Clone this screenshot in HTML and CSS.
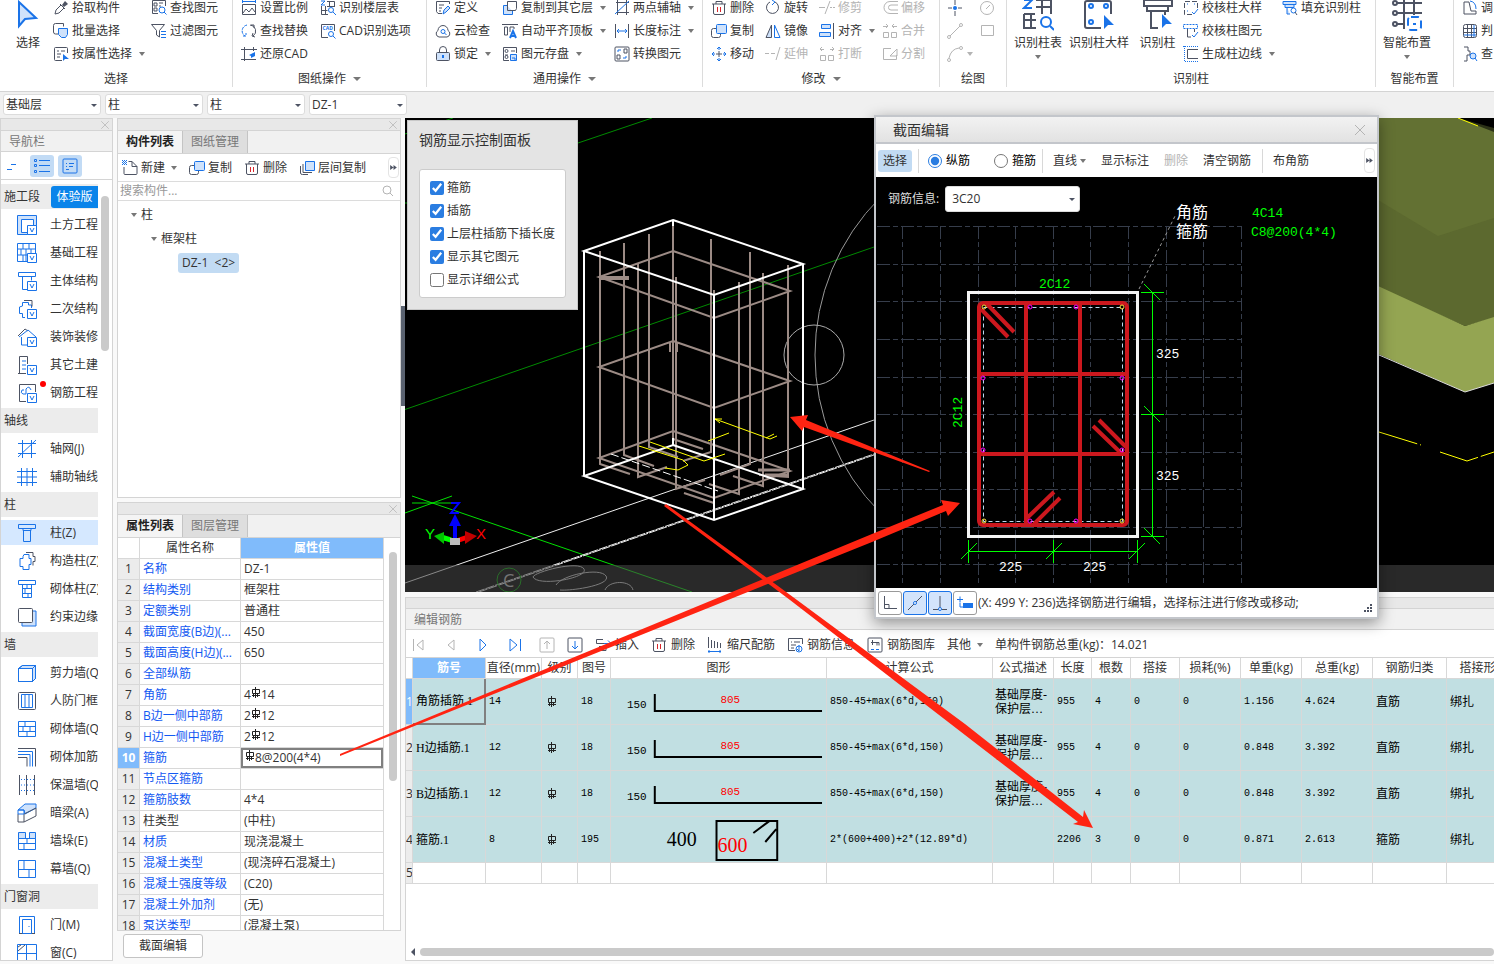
FILE: index.html
```html
<!DOCTYPE html>
<html lang="zh-CN">
<head>
  <meta charset="UTF-8">
  <meta name="viewport" content="width=device-width, initial-scale=1.0">
  <title>截面编辑</title>
  <link rel="stylesheet" href="styles.css">
</head>
<body>
  <!-- icon sprite -->
  <svg class="sprite" aria-hidden="true">
    <symbol id="cursor" viewBox="0 0 32 32"><path class="b2 lf" d="M7 3v24l6-7 11-1z"/></symbol>
    <symbol id="pick" viewBox="0 0 16 16"><path class="k" d="M2 14l1-4 5-5 3 3-5 5zM7 4l5 5"/><path class="kf" d="M9 5l3-4 3 3-4 3z"/></symbol>
    <symbol id="batch" viewBox="0 0 16 16"><path class="k" d="M5 11H2.500a2 2 0 0 1-2-2V2.500a2 2 0 0 1 2-2h8v3"/><path class="b lf" d="M5.500 5.500h9v6l-2 3h-4l-3-3z"/></symbol>
    <symbol id="attr" viewBox="0 0 16 16"><path class="k" d="M9 14.500H2.500a1 1 0 0 1-1-1v-11a1 1 0 0 1 1-1h11a1 1 0 0 1 1 1V7M4 5h2m2 0h4M4 8h4M4 11h3"/><path class="bf" d="M10 8v7l2-2h4z"/></symbol>
    <symbol id="find" viewBox="0 0 16 16"><path class="k" d="M7 13.500H1.500v-13h13V6M3 3h3v3H3zm0 5h3v3H3zM8 3h4M8 6h2"/><circle class="b" cx="11" cy="10" r="3"/><path class="b" d="M13 12l2.500 2.500"/></symbol>
    <symbol id="filter" viewBox="0 0 16 16"><path class="k" d="M.5 1.500h13l-5 6V14l-3-2V7.500z"/><path class="b" d="M10 8.500h5M10 11.500h5M10 14.500h5"/></symbol>
    <symbol id="scale" viewBox="0 0 16 16"><path class="b" d="M1 1.500h14M1.500 0v3M14.500 0v3"/><path class="k" d="M1.500 4.500h13v10h-13zM2 13l3-4 3 3 3-4 3 4"/></symbol>
    <symbol id="replace" viewBox="0 0 16 16"><path class="b" d="M6 2a6 6 0 0 0-2 11M2 13h3v-3" stroke-dasharray="3 1"/><path class="k" d="M9 2a6 6 0 0 1 3 11m2 1l-3-1 1-3M10 2h3v3"/></symbol>
    <symbol id="restore" viewBox="0 0 16 16"><path class="k" d="M3.500 1v14M0 3.500h16M0 13.500h15M12.500 1v4"/><path class="bf" d="M14 6l-6 3 2 1 0 2 4-2z"/></symbol>
    <symbol id="floors" viewBox="0 0 16 16"><path class="k" d="M7 1.500h7.500V7M7 6.500h7M9.500 1v5M1.500 6v8.500H8M1.500 10.500h6M5.500 6v8"/><path class="b" d="M1 1h4L1 5h4"/><circle class="b" cx="11" cy="10" r="2.500"/><path class="b" d="M13 12l3 3"/></symbol>
    <symbol id="cadopt" viewBox="0 0 16 16"><path class="k" d="M8 14.500H1.500v-13h13V8"/><text class="cadtxt" x="2.500" y="7">CAD</text><circle class="b" cx="11" cy="11" r="2.500"/><path class="b" d="M13 13l2.500 2.500"/></symbol>
    <symbol id="define" viewBox="0 0 16 16"><path class="k" d="M7 13.500H3l-1.500-2V1.500h13V4M4 5h5M4 8h3M4 11h2"/><path class="b lf" d="M8 14l1-4 4-4 2 2-4 4z"/></symbol>
    <symbol id="cloud" viewBox="0 0 16 16"><path class="k" d="M4 14a3.500 3.500 0 0 1-1-6.500 5 5 0 0 1 10 0A3.500 3.500 0 0 1 12 14z"/><circle class="b" cx="8" cy="8.500" r="2"/><path class="b" d="M9.500 10l2 2"/></symbol>
    <symbol id="lock" viewBox="0 0 16 16"><rect class="k lf" x="1.500" y="6.500" width="13" height="8" rx="1"/><path class="k" d="M4.500 6V4a3.500 3.500 0 0 1 7 0v2"/><path class="b2" d="M8 9v3"/></symbol>
    <symbol id="copyto" viewBox="0 0 16 16"><path class="b lf" d="M5 5.500H1.500v9h9V11"/><path class="k" d="M5.500 1.500h9v7l-1 2h-8z"/></symbol>
    <symbol id="topalign" viewBox="0 0 16 16"><path class="k" d="M0 1.500h16M2.500 4v8h3V4zM8 9V4h4v2"/><path class="b2" d="M8 15l3-7 3 7M9 13h4"/></symbol>
    <symbol id="save" viewBox="0 0 16 16"><path class="k" d="M7 14.500H1.500v-13h13V7M9 5h4M3 9h3"/><circle class="k" cx="4.500" cy="5" r="1.500"/><circle class="k" cx="4.500" cy="11" r="1.500"/><path class="b lf" d="M8.500 8.500h6v6h-6zM10 12h3v2"/></symbol>
    <symbol id="axis2" viewBox="0 0 16 16"><path class="k" d="M2 2.500h13M2 12.500h13M3.500 0v15M12.500 0v15"/><path class="b" d="M1 14L15 1"/></symbol>
    <symbol id="length" viewBox="0 0 16 16"><path class="k" d="M1.500 1v14M14.500 1v14"/><path class="b" d="M3 8h10M5 6L3 8l2 2M11 6l2 2-2 2"/></symbol>
    <symbol id="convert" viewBox="0 0 16 16"><rect class="k" x="1" y="1" width="14" height="14" rx="1"/><path class="k" d="M3 9h3v4H3zm7-6h3v4h-3z"/><path class="b" d="M4 6V4h3M9 12h3v-2"/></symbol>
    <symbol id="trash" viewBox="0 0 16 16"><path class="k" d="M1 4h14M5 4V1.500h6V4M2.500 4v9a1.500 1.500 0 0 0 1.500 1.500h8a1.500 1.500 0 0 0 1.500-1.500V4"/><path class="r" d="M6.500 7v5M9.500 7v5"/></symbol>
    <symbol id="copy" viewBox="0 0 16 16"><path class="k" d="M5 5.500H2.500a2 2 0 0 0-2 2v5a2 2 0 0 0 2 2h5a2 2 0 0 0 2-2V11"/><rect class="b lf" x="5.500" y="1.500" width="10" height="9" rx="1"/></symbol>
    <symbol id="move" viewBox="0 0 16 16"><path class="b" d="M8 4V1M6 3l2-2 2 2M8 12v3m-2-2l2 2 2-2M4 8H1m2-2L1 8l2 2M12 8h3m-2-2l2 2-2 2"/><path class="k" d="M5 8h6M8 5v6"/></symbol>
    <symbol id="rotate" viewBox="0 0 16 16"><path class="k" d="M10 2a6 6 0 1 1-5 0"/><path class="b" d="M7 0l3 2-3 3"/></symbol>
    <symbol id="mirror" viewBox="0 0 16 16"><path class="k lf" d="M6.500 2v12.500H1z"/><path class="b" d="M9.500 2v12.500H15z"/></symbol>
    <symbol id="alignr" viewBox="0 0 16 16"><path class="k" d="M14.500 0v16"/><path class="b lf" d="M2.500 1.500h9v4h-9zM.5 9.500h11v4H.5z"/></symbol>
    <symbol id="trim" viewBox="0 0 16 16"><path class="g" d="M0 7.500h6M11 7.500h2m1 0h2M6 14L11 1"/></symbol>
    <symbol id="extend" viewBox="0 0 16 16"><path class="g" d="M0 7.500h4m2 0h4M11 14l4-13"/></symbol>
    <symbol id="offset" viewBox="0 0 16 16"><path class="g" d="M16 1.500H8a6 6 0 0 0 0 12h8M16 5H9a2.500 2.500 0 0 0 0 5h7"/></symbol>
    <symbol id="merge" viewBox="0 0 16 16"><path class="g" d="M1.500 9.500h5v5h-5zM9.500 9.500h5v5h-5zM1 3.500h5M4 1l2 2-2 2M15 3.500h-5M12 1l-2 2 2 2"/></symbol>
    <symbol id="break" viewBox="0 0 16 16"><path class="g" d="M1.500 9.500h5v5h-5zM9.500 9.500h5v5h-5zM1 3.500h4M3 1L1 3l2 2M15 3.500h-4M13 1l2 2-2 2"/></symbol>
    <symbol id="split" viewBox="0 0 16 16"><path class="g" d="M9 2.500H1.500v11h13V9M8 10l7-7v7z"/></symbol>
    <symbol id="point" viewBox="0 0 16 16"><path class="k" d="M8 0v5M8 11v5M1 8h4M11 8h4"/><circle class="bf" cx="8" cy="8" r="2"/></symbol>
    <symbol id="line" viewBox="0 0 16 16"><path class="g" d="M3 13L13 3"/><circle class="g" cx="2" cy="14" r="1.500"/><circle class="g" cx="14" cy="2" r="1.500"/></symbol>
    <symbol id="arc" viewBox="0 0 16 16"><path class="g" d="M2 12Q4 3 12 2"/><circle class="g" cx="2" cy="14" r="1.500"/><circle class="g" cx="14" cy="2" r="1.500"/></symbol>
    <symbol id="circle" viewBox="0 0 16 16"><circle class="g" cx="8" cy="8" r="6.500"/><path class="g" d="M7 9l4-4"/></symbol>
    <symbol id="rect" viewBox="0 0 16 16"><path class="g" d="M2.500 2.500h12v10h-12z"/></symbol>
    <symbol id="coltable" viewBox="0 0 32 32"><path class="k2" d="M14 1h15v14M14 8h15M20 1v14M2 15v14h12M2 21h12M9 15v14M2 15h11"/><path class="b2" d="M2 1h8l-8 8h8"/><circle class="b2" cx="24" cy="23" r="5"/><path class="b2" d="M28 27l4 4"/></symbol>
    <symbol id="colsample" viewBox="0 0 32 32"><path class="k2" d="M18 29H4a2 2 0 0 1-2-2V4a2 2 0 0 1 2-2h22a2 2 0 0 1 2 2v11"/><circle class="b2" cx="8" cy="7" r="2"/><circle class="b2" cx="23" cy="7" r="2"/><circle class="b2" cx="8" cy="23" r="2"/><path class="bf" d="M21 16v14l4-4h6z"/></symbol>
    <symbol id="col" viewBox="0 0 32 32"><path class="k2" d="M2 1h28v6H2zM5 8v4h21V8M9 12v17h7M23 12v4"/><path class="bf" d="M20 15v14l4-4h6z"/></symbol>
    <symbol id="smart" viewBox="0 0 32 32"><path class="k2" d="M6 4h25M6 14h25M6 25h8M13 0v30M23 0v16"/><circle class="k2 wf" cx="4" cy="4" r="2"/><circle class="k2 wf" cx="4" cy="14" r="2"/><circle class="k2 wf" cx="4" cy="25" r="2"/><rect class="b2 wf" x="17" y="18" width="13" height="13" rx="3" stroke-dasharray="8 4"/><path class="b2" d="M22 25h3"/></symbol>
    <symbol id="samplecheck" viewBox="0 0 16 16"><path class="k" d="M9 14.500H1.500v-13h13V8" stroke-dasharray="5 2"/><path class="b" d="M4 4h1m6 0h1M4 11h1M9 12l2 2 4-5"/></symbol>
    <symbol id="colcheck" viewBox="0 0 16 16"><path class="b" d="M.5 1.500h14v4H.5z" stroke-dasharray="2 1"/><path class="k" d="M4.500 6v8H8M11.500 6v3"/><path class="b" d="M9 12l2 2 4-5"/></symbol>
    <symbol id="colborder" viewBox="0 0 16 16"><path class="k" d="M15 3.500H4.500v9H15"/><path class="b" d="M1.500 0v15.500H16M0 .5h16" stroke-dasharray="1 1"/></symbol>
    <symbol id="colfill" viewBox="0 0 16 16"><path class="b lf" d="M1 1.500h13v3H1zM3 4.500v3h9v-3M5 7.500v6.500h3"/><circle class="b" cx="11.500" cy="10.500" r="2.500"/><path class="k" d="M13 12l2 3"/></symbol>
    <symbol id="adjust" viewBox="0 0 16 16"><path class="k" d="M2 2h5l2 9h5v3H2z"/><path class="b" d="M8 1q6 1 6 8"/></symbol>
    <symbol id="gridball" viewBox="0 0 16 16"><rect class="k" x="1.500" y="1.500" width="13" height="13" rx="2"/><path class="k" d="M5.500 2v12M9.500 2v12M2 5.500h12M2 9.500h12"/><path class="b" d="M12 2v12M2 12h12"/></symbol>
    <symbol id="query" viewBox="0 0 16 16"><path class="k" d="M2 1h4v4h2v4H5v6H2"/><circle class="b lf" cx="11" cy="10" r="3"/><path class="b" d="M13 12l2 3"/></symbol>
    <symbol id="newdoc" viewBox="0 0 16 16"><path class="k" d="M6.500 1.500H10l5 5v7a1 1 0 0 1-1 1H3a1 1 0 0 1-1-1V7M10 1.500v5h5"/><path class="b" d="M0 .5h5M0 2.500h5M0 4.500h5M1 1.500h4M1 3.500h4" stroke-dasharray="1 1"/></symbol>
    <symbol id="layers" viewBox="0 0 16 16"><path class="b lf" d="M6.500 1.500h9v9h-9z"/><path class="k" d="M4 4v8.500h9M1.500 6v7q0 1.500 2 1.500H9"/></symbol>
    <symbol id="insert" viewBox="0 0 16 16"><path class="k" d="M8 2.500H1.500v4H12M4 9.500h7v4H2"/><path class="b" d="M9 6.500h6m-2-3l3 3-3 3"/></symbol>
    <symbol id="ruler" viewBox="0 0 16 16"><path class="k" d="M1.500 0v11M4.500 3v8M7.500 4v7M10.500 5v6M13.500 6v5"/><path class="b" d="M1 14.500h13M2 13v3M13 13v3"/></symbol>
    <symbol id="info" viewBox="0 0 16 16"><path class="k" d="M8 13.500H1.500v-12h14V7M4 5h1m2 0h6M4 8h5M4 11h3"/><circle class="b" cx="12" cy="12" r="3"/><path class="b" d="M12 8v6l-2-2"/></symbol>
    <symbol id="lib" viewBox="0 0 16 16"><rect class="k" x="1" y="1" width="14" height="14" rx="1"/><path class="k" d="M5.500 3v5M4 5.500h6v3M10 5.500h2v3"/><path class="b" d="M4 12.500h3m2 0h3"/></symbol>
    <symbol id="first" viewBox="0 0 16 16"><path class="g" d="M2.500 2v12M12 3v10L6 8z"/></symbol>
    <symbol id="prev" viewBox="0 0 16 16"><path class="g" d="M11 3v10L5 8z"/></symbol>
    <symbol id="next" viewBox="0 0 16 16"><path class="b" d="M5 2v12l6-6z"/></symbol>
    <symbol id="last" viewBox="0 0 16 16"><path class="b" d="M3 2v12l7-6zM13.500 2v12"/></symbol>
    <symbol id="up" viewBox="0 0 16 16"><rect class="g" x="1" y="1" width="14" height="14" rx="1"/><path class="g" d="M8 12V4M5 7l3-3 3 3"/></symbol>
    <symbol id="down" viewBox="0 0 16 16"><rect class="k" x="1" y="1" width="14" height="14" rx="1"/><path class="b" d="M8 4v8M5 9l3 3 3-3"/></symbol>
    <symbol id="search" viewBox="0 0 16 16"><circle class="g" cx="7" cy="7" r="4"/><path class="g" d="M10 10l3 3"/></symbol>
    <symbol id="close" viewBox="0 0 16 16"><path class="g" d="M3 3l10 10M13 3L3 13"/></symbol>
    <symbol id="more" viewBox="0 0 8 6"><path class="kf" d="M0 0v6l4-3zM4 0v6l4-3z"/></symbol>
    <symbol id="rebar" viewBox="0 0 10 12"><path class="kk" d="M1.500 2.500h7v4h-7zM4.500 0v11M2.500 7v3M6.500 7v3M1 8.500h8"/></symbol>
    <!-- navigation icons -->
    <symbol id="vtag" viewBox="0 0 20 20"><path class="b wf" d="M10.500 10.500h9v9h-9z"/><path class="b" d="M13 13l2 4 2-4"/></symbol>
    <symbol id="n-earth" viewBox="0 0 20 20"><path class="b lf" d="M.5.500h19v19H.5z"/><path class="b wf" d="M4.500 4.500h12v13h-12z"/><use href="#vtag"/></symbol>
    <symbol id="n-base" viewBox="0 0 20 20"><path class="b" d="M.5.500h18v18H.5zM.5 6h18M.5 12h18M6 .5V6M12 .5V6M4 6v6M9 6v12M14 6v6M6 12v6"/><use href="#vtag"/></symbol>
    <symbol id="n-main" viewBox="0 0 20 20"><path class="b" d="M1.500 1.500h17v4h-17zM5.500 5.500v13H10M14.500 5.500v4"/><use href="#vtag"/></symbol>
    <symbol id="n-second" viewBox="0 0 20 20"><path class="b" d="M8 18.500H5.500v-4h-3V8l3-1V3.500h6V6h3v3"/><path class="k" d="M7 1.500h8v6"/><use href="#vtag"/></symbol>
    <symbol id="n-deco" viewBox="0 0 20 20"><path class="k" d="M1 9l7-7 3 2"/><path class="b" d="M2 10l9-7 8 7M4.500 10v8H10"/><use href="#vtag"/></symbol>
    <symbol id="n-other" viewBox="0 0 20 20"><path class="k" d="M1 18.500h8M2.500 18V1.500h8V9"/><path class="b" d="M5 6h4M5 10h4M5 14h4"/><use href="#vtag"/></symbol>
    <symbol id="n-rebar" viewBox="0 0 20 20"><path class="k" d="M9 18.500H2.500v-17h16V9"/><path class="b" d="M7 7H5q-2 3 1 4h3V6q3-4 5 1"/><use href="#vtag"/></symbol>
    <symbol id="n-axis" viewBox="0 0 20 20"><path class="b" d="M1 4.500h18M1 14.500h18M5.500 1v18M14.500 1v18M1 18L19 1"/></symbol>
    <symbol id="n-aux" viewBox="0 0 20 20"><path class="b" d="M0 4.500h20M0 10h20M0 15.500h20M4.500 1v18M10 1v18M15.500 1v18"/></symbol>
    <symbol id="n-col" viewBox="0 0 20 20"><path class="b" d="M1.500 1.500h17v4h-17zM6 5.500v2h8v-2M6.500 7v11.500h7V7"/></symbol>
    <symbol id="n-gz" viewBox="0 0 20 20"><path class="b" d="M7 3.500h5v4h2v6h-2v5H6v-3H3v-8h3v-2z"/><path class="k" d="M9 1.500h7v4h2v5h-2v4"/></symbol>
    <symbol id="n-qt" viewBox="0 0 20 20"><path class="b" d="M1.500 1.500h17v4h-17zM5.500 5.500v13h9v-13M5 9.500h9M5 14.500h9M10 6v3M8 10v4M11 14v4"/></symbol>
    <symbol id="n-ys" viewBox="0 0 20 20"><path class="b lf" d="M5 16v3h14V4h-3"/><rect class="k wf" x="1.500" y="1.500" width="14" height="14" rx="1"/></symbol>
    <symbol id="n-shear" viewBox="0 0 20 20"><path class="b lf" d="M1.500 5.500l4-3h13v13l-3 3z"/><path class="k wf" d="M1.500 5.500h14v13h-14z"/><path class="b" d="M1.500 5.500l4-3h13v13l-3 3M15.500 5.500l3-3M1.500 5.500h14v13h-14z"/></symbol>
    <symbol id="n-rf" viewBox="0 0 20 20"><rect class="k" x="1.500" y="1.500" width="17" height="17" rx="1"/><path class="b" d="M4.500 3.500h11v13h-11zM8 4v12M12 4v12"/></symbol>
    <symbol id="n-brick" viewBox="0 0 20 20"><path class="b" d="M1.500 2.500h17v15h-17zM1 7.500h18M1 12.500h18M8 3v5M6 8v5M13 8v5M10 13v4"/></symbol>
    <symbol id="n-bar" viewBox="0 0 20 20"><path class="k" d="M1 1.500h17.500v18M1 10.500h9v9"/><path class="b" d="M1 4.500h14.500v15M1 7.500h12v12"/></symbol>
    <symbol id="n-warm" viewBox="0 0 20 20"><path class="k" d="M2.500 0v20M9.500 0v20M17.500 0v20"/><path class="b" d="M4 4.500h14M4 10h14M4 15.500h14" stroke-dasharray="1 2"/></symbol>
    <symbol id="n-beam" viewBox="0 0 20 20"><path class="b lf" d="M1 7l7-6h11v4L8 11 7 7z"/><path class="k" d="M1 11v8h6v-8M7 19l12-6V5L7 11"/><path class="b" d="M1 7h6v4H1z"/></symbol>
    <symbol id="n-pier" viewBox="0 0 20 20"><path class="b lf" d="M1.500 1.500h7v6h-7zM12.500 1.500h6v6h-6z"/><path class="b" d="M1.500 7.500h17v11h-17zM1 12.500h17M10 7v5M7 13v5"/></symbol>
    <symbol id="n-curtain" viewBox="0 0 20 20"><path class="b" d="M1.500 1.500h17v17h-17zM1 10.500h17M7 2v8M12 11v7"/></symbol>
    <symbol id="n-door" viewBox="0 0 20 20"><path class="b" d="M2.500 19V1.500h15V19"/><path class="k" d="M2 18.500h4M14 18.500h4"/><path class="b" d="M5.500 4.500h9v14h-9zM12 11v1"/></symbol>
    <symbol id="n-window" viewBox="0 0 20 20"><path class="b" d="M.5 1.500h19v18H.5zM9.500 1v19M0 10.500h20"/><path class="k" d="M1 8l7-6M1 4l3-2"/></symbol>
  </svg>

  <div class="app">
    <header class="ribbon">
      <section class="group g-select">
        <div class="tools">
          <button class="big"><svg><use href="#cursor"/></svg>选择</button>
          <button><svg><use href="#pick"/></svg>拾取构件</button>
          <button><svg><use href="#batch"/></svg>批量选择</button>
          <button><svg><use href="#attr"/></svg>按属性选择<i class="caret"></i></button>
          <button><svg><use href="#find"/></svg>查找图元</button>
          <button><svg><use href="#filter"/></svg>过滤图元</button>
        </div>
        <h2>选择</h2>
      </section>
      <section class="group g-drawing">
        <div class="tools">
          <button><svg><use href="#scale"/></svg>设置比例</button>
          <button><svg><use href="#replace"/></svg>查找替换</button>
          <button><svg><use href="#restore"/></svg>还原CAD</button>
          <button><svg><use href="#floors"/></svg>识别楼层表</button>
          <button><svg><use href="#cadopt"/></svg>CAD识别选项</button>
        </div>
        <h2>图纸操作<i class="caret"></i></h2>
      </section>
      <section class="group g-common">
        <div class="tools">
          <button><svg><use href="#define"/></svg>定义</button>
          <button><svg><use href="#cloud"/></svg>云检查</button>
          <button><svg><use href="#lock"/></svg>锁定<i class="caret"></i></button>
          <button><svg><use href="#copyto"/></svg>复制到其它层<i class="caret"></i></button>
          <button><svg><use href="#topalign"/></svg>自动平齐顶板<i class="caret"></i></button>
          <button><svg><use href="#save"/></svg>图元存盘<i class="caret"></i></button>
          <button><svg><use href="#axis2"/></svg>两点辅轴<i class="caret"></i></button>
          <button><svg><use href="#length"/></svg>长度标注<i class="caret"></i></button>
          <button><svg><use href="#convert"/></svg>转换图元</button>
        </div>
        <h2>通用操作<i class="caret"></i></h2>
      </section>
      <section class="group g-modify">
        <div class="tools">
          <button><svg><use href="#trash"/></svg>删除</button>
          <button><svg><use href="#copy"/></svg>复制</button>
          <button><svg><use href="#move"/></svg>移动</button>
          <button><svg><use href="#rotate"/></svg>旋转</button>
          <button><svg><use href="#mirror"/></svg>镜像</button>
          <button disabled><svg><use href="#extend"/></svg>延伸</button>
          <button disabled><svg><use href="#trim"/></svg>修剪</button>
          <button><svg><use href="#alignr"/></svg>对齐<i class="caret"></i></button>
          <button disabled><svg><use href="#break"/></svg>打断</button>
          <button disabled><svg><use href="#offset"/></svg>偏移</button>
          <button disabled><svg><use href="#merge"/></svg>合并</button>
          <button disabled><svg><use href="#split"/></svg>分割</button>
        </div>
        <h2>修改<i class="caret"></i></h2>
      </section>
      <section class="group g-draw">
        <div class="tools">
          <button aria-label="点"><svg><use href="#point"/></svg></button>
          <button aria-label="直线"><svg><use href="#line"/></svg></button>
          <button aria-label="弧" disabled><svg><use href="#arc"/></svg><i class="caret"></i></button>
          <button aria-label="圆"><svg><use href="#circle"/></svg></button>
          <button aria-label="矩形"><svg><use href="#rect"/></svg></button>
        </div>
        <h2>绘图</h2>
      </section>
      <section class="group g-identify">
        <div class="tools">
          <button class="big"><svg><use href="#coltable"/></svg>识别柱表<i class="caret"></i></button>
          <button class="big"><svg><use href="#colsample"/></svg>识别柱大样</button>
          <button class="big"><svg><use href="#col"/></svg>识别柱</button>
          <button><svg><use href="#samplecheck"/></svg>校核柱大样</button>
          <button><svg><use href="#colcheck"/></svg>校核柱图元</button>
          <button><svg><use href="#colborder"/></svg>生成柱边线<i class="caret"></i></button>
          <button><svg><use href="#colfill"/></svg>填充识别柱</button>
        </div>
        <h2>识别柱</h2>
      </section>
      <section class="group g-smart">
        <div class="tools">
          <button class="big"><svg><use href="#smart"/></svg>智能布置<i class="caret"></i></button>
        </div>
        <h2>智能布置</h2>
      </section>
      <section class="group g-rest">
        <div class="tools">
          <button><svg><use href="#adjust"/></svg>调</button>
          <button><svg><use href="#gridball"/></svg>判</button>
          <button><svg><use href="#query"/></svg>查</button>
        </div>
      </section>
    </header>

    <div class="combos">
      <span class="combo"><select aria-label="楼层"><option>基础层</option></select></span>
      <span class="combo"><select aria-label="构件大类"><option>柱</option></select></span>
      <span class="combo"><select aria-label="构件类型"><option>柱</option></select></span>
      <span class="combo"><select aria-label="构件"><option>DZ-1</option></select></span>
    </div>

    <main class="work">
      <aside class="panel nav">
        <div class="strip"><button aria-label="关闭"><svg><use href="#close"/></svg></button></div>
        <h3>导航栏</h3>
        <div class="nav-modes">
          <button aria-label="收起"><svg viewBox="0 0 16 16"><path class="b" d="M1 11.500h5M5 6.500h5"/></svg></button>
          <button class="on" aria-label="列表"><svg viewBox="0 0 16 16"><path class="b" d="M5 2.500h11M5 7.500h11M5 13.500h11M.5 1.500h2v2h-2zM.5 6.500h2v2h-2zM.5 12.500h2v2h-2z"/></svg></button>
          <button class="on" aria-label="图标"><svg viewBox="0 0 16 16"><rect class="b" x="1" y="1" width="14" height="14" rx="1"/><path class="b" d="M4 5.500h1m2 0h5M4 8.500h1m2 0h4M4 11.500h3"/></svg></button>
        </div>
        <div class="nav-body">
          <ul class="nav-list">
            <li class="head">施工段<button class="trial">体验版</button></li>
            <li><svg><use href="#n-earth"/></svg>土方工程</li>
            <li><svg><use href="#n-base"/></svg>基础工程</li>
            <li><svg><use href="#n-main"/></svg>主体结构</li>
            <li><svg><use href="#n-second"/></svg>二次结构</li>
            <li><svg><use href="#n-deco"/></svg>装饰装修</li>
            <li><svg><use href="#n-other"/></svg>其它土建</li>
            <li class="dot"><svg><use href="#n-rebar"/></svg>钢筋工程</li>
            <li class="head">轴线</li>
            <li><svg><use href="#n-axis"/></svg>轴网(J)</li>
            <li><svg><use href="#n-aux"/></svg>辅助轴线</li>
            <li class="head">柱</li>
            <li class="current"><svg><use href="#n-col"/></svg>柱(Z)</li>
            <li><svg><use href="#n-gz"/></svg>构造柱(Z)</li>
            <li><svg><use href="#n-qt"/></svg>砌体柱(Z)</li>
            <li><svg><use href="#n-ys"/></svg>约束边缘</li>
            <li class="head">墙</li>
            <li><svg><use href="#n-shear"/></svg>剪力墙(Q)</li>
            <li><svg><use href="#n-rf"/></svg>人防门框</li>
            <li><svg><use href="#n-brick"/></svg>砌体墙(Q)</li>
            <li><svg><use href="#n-bar"/></svg>砌体加筋</li>
            <li><svg><use href="#n-warm"/></svg>保温墙(Q)</li>
            <li><svg><use href="#n-beam"/></svg>暗梁(A)</li>
            <li><svg><use href="#n-pier"/></svg>墙垛(E)</li>
            <li><svg><use href="#n-curtain"/></svg>幕墙(Q)</li>
            <li class="head">门窗洞</li>
            <li><svg><use href="#n-door"/></svg>门(M)</li>
            <li><svg><use href="#n-window"/></svg>窗(C)</li>
          </ul>
          <div class="vbar"><i class="thumb nav-thumb"></i></div>
        </div>
      </aside>

      <div class="middle">
        <section class="panel comps">
          <div class="strip"><button aria-label="关闭"><svg><use href="#close"/></svg></button></div>
          <div class="tabs"><button class="active">构件列表</button><button>图纸管理</button></div>
          <div class="comp-tools">
            <button><svg><use href="#newdoc"/></svg>新建<i class="caret"></i></button>
            <button><svg><use href="#copy"/></svg>复制</button>
            <button><svg><use href="#trash"/></svg>删除</button>
            <button><svg><use href="#layers"/></svg>层间复制</button>
            <button class="more" aria-label="更多"><svg><use href="#more"/></svg></button>
          </div>
          <div class="search"><input type="text" placeholder="搜索构件..." aria-label="搜索构件"><svg><use href="#search"/></svg></div>
          <ul class="tree">
            <li class="l1"><i class="caret"></i>柱</li>
            <li class="l2"><i class="caret"></i>框架柱</li>
            <li class="l3"><span>DZ-1 &nbsp;&lt;2&gt;</span></li>
          </ul>
        </section>

        <section class="panel props">
          <div class="strip"><button aria-label="关闭"><svg><use href="#close"/></svg></button></div>
          <div class="tabs"><button class="active">属性列表</button><button>图层管理</button></div>
          <div class="props-body">
            <table class="ptable">
              <colgroup><col class="pc-no"><col class="pc-name"><col></colgroup>
              <thead><tr><th></th><th>属性名称</th><th class="sel">属性值</th></tr></thead>
              <tbody>
                <tr><th>1</th><td>名称</td><td>DZ-1</td></tr>
                <tr><th>2</th><td>结构类别</td><td>框架柱</td></tr>
                <tr><th>3</th><td>定额类别</td><td>普通柱</td></tr>
                <tr><th>4</th><td>截面宽度(B边)(...</td><td>450</td></tr>
                <tr><th>5</th><td>截面高度(H边)(...</td><td>650</td></tr>
                <tr><th>6</th><td>全部纵筋</td><td></td></tr>
                <tr><th>7</th><td>角筋</td><td>4<svg class="rebar"><use href="#rebar"/></svg>14</td></tr>
                <tr><th>8</th><td>B边一侧中部筋</td><td>2<svg class="rebar"><use href="#rebar"/></svg>12</td></tr>
                <tr><th>9</th><td>H边一侧中部筋</td><td>2<svg class="rebar"><use href="#rebar"/></svg>12</td></tr>
                <tr class="current"><th>10</th><td>箍筋</td><td><svg class="rebar"><use href="#rebar"/></svg>8@200(4*4)</td></tr>
                <tr><th>11</th><td>节点区箍筋</td><td></td></tr>
                <tr><th>12</th><td>箍筋肢数</td><td>4*4</td></tr>
                <tr class="plain"><th>13</th><td>柱类型</td><td>(中柱)</td></tr>
                <tr><th>14</th><td>材质</td><td>现浇混凝土</td></tr>
                <tr><th>15</th><td>混凝土类型</td><td>(现浇碎石混凝土)</td></tr>
                <tr><th>16</th><td>混凝土强度等级</td><td>(C20)</td></tr>
                <tr><th>17</th><td>混凝土外加剂</td><td>(无)</td></tr>
                <tr><th>18</th><td>泵送类型</td><td>(混凝土泵)</td></tr>
              </tbody>
            </table>
            <div class="vbar"><i class="thumb prop-thumb"></i></div>
          </div>
        </section>
        <div class="footer"><button class="section-edit">截面编辑</button></div>
      </div>

      <div class="splitter"><i></i></div>

      <div class="right">
        <section class="view3d">
          <svg class="scene" viewBox="405 118 1089 474" preserveAspectRatio="xMinYMin slice">
            <path fill="#5c692f" d="M1378 118h80l36 14v186l-29 8-87-38z"/>
            <path fill="#6f7d3a" d="M1378 200l60 36 56-18v-90l-36-10h-80z" opacity=".4"/>
            <path fill="#94a552" d="M1378 286l87 40 29-9v66l-29 9-87-38z"/>
            <path stroke="#ffff00" fill="none" d="M1379 432l42 13M1440 452l27 9 27-9M1458 118l20 8" stroke-dasharray="40 3"/>
            <path stroke="#ddd" fill="none" d="M1379 355l86 37 29-9"/>
            <g stroke="#008a00" fill="none"><path d="M405 134l48-16M578 143l74-25M405 409.500L874 247M405 203h2"/></g>
            <g stroke="#00e000" fill="none"><path d="M412 496l280 96M405 513l47-17M412 503h40"/></g>
            <g stroke="#eee" fill="none"><path d="M405 583L874 420"/><path d="M476 592l398-138M479 592l395-137" stroke-dasharray="9 1"/></g>
            <circle cx="1038" cy="355" r="223" stroke="#999" fill="none"/>
            <circle cx="814" cy="355" r="30" stroke="#aaa" fill="none"/>
            <g stroke="#9c8b85" stroke-width="2" fill="none">
              <path d="M600 251v213l30 10M624 243v212l30 11M649 234v213l29 10M673 225v214l30 10M638 264v213l29-10M676 277v212l29-9M711 239v213l-28 9M714 290v213l-30-10M739 282v212l-30-10M750 252v212l-30 11M763 273v213l-30-10M788 265v212l-29-2"/>
              <path d="M673 251l117 40-76 27-115-41zM673 341l117 40-76 27-115-41zM673 431l117 40-76 27-115-40zM670 343v9M677 343v9"/>
              <path d="M599 278h30" stroke-width="4"/><path d="M758 470h32M765 475h22" stroke-width="3"/>
            </g>
            <g stroke="#fff" stroke-width="2" fill="none"><path d="M673 220l130 44-89 31-130-44zM673 445l130 44-89 31-130-44zM584 251v225M714 295v225M803 264v225M673 220v6M673 438v7"/></g>
            <path stroke="#fff" fill="none" stroke-dasharray="8 3" d="M611 454l107 37"/>
            <path stroke="#ffff00" fill="none" d="M639 446l44 14 5 5-10 5-13-2M650 442l54 19 21-7M708 441l21-8M720 423l-5-4h7M715 419l55 20 7-3M766 438l8-4"/>
            <g stroke="#ccc" fill="none">
              <path d="M533 577c1-5 46-17 51-8s-46 18-51 8zM556 585c6-10 44-18 50-9s-34 15-46 14M605 590c4-10 26-10 28 0"/>
              <text class="scene-c" x="503" y="587">C</text>
            </g>
            <circle cx="509" cy="580" r="12" stroke="#0a0" fill="none"/>
            <rect x="405" y="565" width="1089" height="27" fill="#444" opacity=".6"/>
            <g>
              <path stroke="#0000ff" stroke-width="4" d="M455 538v-15"/><path fill="#0000ff" d="M449 526l6-12 6 12z"/>
              <path fill="none" stroke="#0000ff" stroke-width="2" d="M451 503h8l-8 10h8"/>
              <path stroke="#00ff00" stroke-width="5" d="M451 540l-10-3"/><path fill="#00c000" d="M434 536l10-4v12z"/>
              <path stroke="#ff0000" stroke-width="5" d="M459 540l9-3"/><path fill="#c00000" d="M477 536l-12-5v13z"/>
              <path fill="#bbb" d="M450 538h10v7h-10z"/>
              <text class="axis" x="425" y="539" fill="#00ff00">Y</text><text class="axis" x="476" y="539" fill="#ff0000">X</text>
            </g>
          </svg>
          <div class="rebar-panel">
            <h3>钢筋显示控制面板</h3>
            <div class="checks">
              <label><input type="checkbox" checked>箍筋</label>
              <label><input type="checkbox" checked>插筋</label>
              <label><input type="checkbox" checked>上层柱插筋下插长度</label>
              <label><input type="checkbox" checked>显示其它图元</label>
              <label><input type="checkbox">显示详细公式</label>
            </div>
          </div>
        </section>

        <section class="panel edit">
          <div class="strip"></div>
          <h3>编辑钢筋</h3>
          <div class="edit-tools">
            <button class="ico" aria-label="首条"><svg><use href="#first"/></svg></button>
            <button class="ico" aria-label="上一条"><svg><use href="#prev"/></svg></button>
            <button class="ico" aria-label="下一条"><svg><use href="#next"/></svg></button>
            <button class="ico" aria-label="末条"><svg><use href="#last"/></svg></button>
            <button aria-label="上移"><svg><use href="#up"/></svg></button>
            <button aria-label="下移"><svg><use href="#down"/></svg></button>
            <button><svg><use href="#insert"/></svg>插入</button>
            <button><svg><use href="#trash"/></svg>删除</button>
            <button><svg><use href="#ruler"/></svg>缩尺配筋</button>
            <button><svg><use href="#info"/></svg>钢筋信息</button>
            <button><svg><use href="#lib"/></svg>钢筋图库</button>
            <button>其他<i class="caret"></i></button>
            <span>单构件钢筋总重(kg)：14.021</span>
          </div>
          <div class="rows">
            <table class="rtable">
              <colgroup><col class="w7"><col class="w73"><col class="w56"><col class="w36"><col class="w33"><col class="w216"><col class="w166"><col class="w61"><col class="w38"><col class="w39"><col class="w49"><col class="w61"><col class="w61"><col class="w71"><col class="w74"><col class="w74"></colgroup>
              <thead><tr><th></th><th class="sel">筋号</th><th>直径(mm)</th><th>级别</th><th>图号</th><th>图形</th><th>计算公式</th><th>公式描述</th><th>长度</th><th>根数</th><th>搭接</th><th>损耗(%)</th><th>单重(kg)</th><th>总重(kg)</th><th>钢筋归类</th><th>搭接形式</th></tr></thead>
              <tbody>
                <tr class="current"><th>1</th><td class="zh">角筋插筋.1</td><td>14</td><td><svg class="rebar"><use href="#rebar"/></svg></td><td>18</td><td class="fig"><svg viewBox="0 0 216 45"><text x="16" y="29">150</text><text class="red" x="110" y="24">805</text><path d="M44 15v17h168"/></svg></td><td>850-45+max(6*d,150)</td><td class="zh two">基础厚度-<br>保护层…</td><td>955</td><td>4</td><td>0</td><td>0</td><td>1.156</td><td>4.624</td><td class="zh">直筋</td><td class="zh">绑扎</td></tr>
                <tr><th>2</th><td class="zh">H边插筋.1</td><td>12</td><td><svg class="rebar"><use href="#rebar"/></svg></td><td>18</td><td class="fig"><svg viewBox="0 0 216 45"><text x="16" y="29">150</text><text class="red" x="110" y="24">805</text><path d="M44 15v17h168"/></svg></td><td>850-45+max(6*d,150)</td><td class="zh two">基础厚度-<br>保护层…</td><td>955</td><td>4</td><td>0</td><td>0</td><td>0.848</td><td>3.392</td><td class="zh">直筋</td><td class="zh">绑扎</td></tr>
                <tr><th>3</th><td class="zh">B边插筋.1</td><td>12</td><td><svg class="rebar"><use href="#rebar"/></svg></td><td>18</td><td class="fig"><svg viewBox="0 0 216 45"><text x="16" y="29">150</text><text class="red" x="110" y="24">805</text><path d="M44 15v17h168"/></svg></td><td>850-45+max(6*d,150)</td><td class="zh two">基础厚度-<br>保护层…</td><td>955</td><td>4</td><td>0</td><td>0</td><td>0.848</td><td>3.392</td><td class="zh">直筋</td><td class="zh">绑扎</td></tr>
                <tr><th>4</th><td class="zh">箍筋.1</td><td>8</td><td><svg class="rebar"><use href="#rebar"/></svg></td><td>195</td><td class="fig"><svg viewBox="0 0 216 45"><text class="lg" x="56" y="29">400</text><text class="lg red" x="107" y="35">600</text><path d="M106 4h61v39h-61zM143 16l16-12M155 25l11-13"/></svg></td><td>2*(600+400)+2*(12.89*d)</td><td></td><td>2206</td><td>3</td><td>0</td><td>0</td><td>0.871</td><td>2.613</td><td class="zh">箍筋</td><td class="zh">绑扎</td></tr>
                <tr class="empty"><th>5</th><td></td><td></td><td></td><td></td><td></td><td></td><td></td><td></td><td></td><td></td><td></td><td></td><td></td><td></td><td></td></tr>
              </tbody>
            </table>
          </div>
          <div class="hbar"><i class="left"></i><i class="thumb"></i></div>
        </section>
      </div>
    </main>

    <!-- section editor window -->
    <div class="dialog" role="dialog" aria-label="截面编辑">
      <div class="dlg-title"><h3>截面编辑</h3><button aria-label="关闭"><svg><use href="#close"/></svg></button></div>
      <div class="dlg-tools">
        <button class="on">选择</button>
        <i class="sep"></i>
        <label><input type="radio" name="bar" checked>纵筋</label>
        <label class="second"><input type="radio" name="bar">箍筋</label>
        <i class="sep"></i>
        <button>直线<i class="caret"></i></button>
        <button>显示标注</button>
        <button disabled>删除</button>
        <button>清空钢筋</button>
        <i class="sep"></i>
        <button>布角筋</button>
        <button class="more" aria-label="更多"><svg><use href="#more"/></svg></button>
      </div>
      <div class="dlg-canvas">
        <svg class="scene" viewBox="876 177 501 411" preserveAspectRatio="xMinYMin slice">
          <g stroke="#363d4b" fill="none" stroke-dasharray="13 3 5 3">
            <path d="M902.500 226v360M940.500 226v360M978.500 226v360M1015.500 226v360M1053.500 226v360M1090.500 226v360M1128.500 226v360M1166.500 226v360M1203.500 226v360M1241.500 226v360"/>
            <path d="M877 226.500h364M877 264.500h364M877 301.500h364M877 339.500h364M877 377.500h364M877 414.500h364M877 452.500h364M877 489.500h364M877 527.500h364M877 564.500h364"/>
          </g>
          <path stroke="#999" stroke-dasharray="3 3" fill="none" d="M1139 289l37-75"/>
          <rect x="968.500" y="292.500" width="169" height="244" stroke="#f4f4f4" stroke-width="3" fill="none"/>
          <rect x="983.500" y="307.500" width="139" height="214" stroke="#bcd8ee" stroke-dasharray="4 3" fill="none"/>
          <g stroke="#cc181e" stroke-width="4" fill="none">
            <rect x="979" y="303" width="148" height="222" rx="4"/>
            <path d="M1026 303v222M1080 303v222M979 374h148M979 454h148M981 309l27 28M987 304l27 28M1093 426l29 28M1099 420l27 27M1054 492l-27 26M1060 498l-26 26"/>
          </g>
          <g stroke="#ff00ff" fill="none"><circle cx="1030" cy="307" r="2"/><circle cx="1076" cy="307" r="2"/><circle cx="1030" cy="521" r="2"/><circle cx="1076" cy="521" r="2"/><circle cx="983" cy="378" r="2"/><circle cx="1122" cy="378" r="2"/><circle cx="983" cy="450" r="2"/><circle cx="1122" cy="450" r="2"/></g>
          <g stroke="#ffe040" fill="none"><circle cx="984" cy="307" r="2"/><circle cx="1122" cy="307" r="2"/><circle cx="984" cy="521" r="2"/><circle cx="1122" cy="521" r="2"/></g>
          <path stroke="#00ff00" fill="none" d="M1152.500 292v245M1141 292.500h23M1141 414.500h23M1141 536.500h23M1144 284l16 16M1144 406l16 16M1144 528l16 16M968 551.500h170M968.500 540v23M1053.500 540v23M1137.500 540v23M961 559l16-16M1046 559l16-16M1129 559l16-16"/>
          <g class="cad green"><text x="1039" y="288">2C12</text><text x="1252" y="217">4C14</text><text x="1251" y="236">C8@200(4*4)</text><text transform="translate(962 428) rotate(-90)">2C12</text></g>
          <g class="cad"><text x="1156" y="358">325</text><text x="1156" y="480">325</text><text x="999" y="571">225</text><text x="1083" y="571">225</text><text class="label" x="1176" y="218">角筋</text><text class="label" x="1176" y="237">箍筋</text></g>
        </svg>
        <div class="bar-info"><label for="barInfo">钢筋信息:</label><span class="combo"><select id="barInfo"><option>3C20</option></select></span></div>
      </div>
      <div class="dlg-status">
        <button aria-label="正交"><svg viewBox="0 0 16 16"><path class="k" d="M2.500 1v12.500H15M2 9.500h5v4"/></svg></button>
        <button class="on" aria-label="中点"><svg viewBox="0 0 16 16"><path class="k" d="M1 15L15 1"/><circle class="b wf" cx="8" cy="8" r="1.500"/></svg></button>
        <button class="on" aria-label="垂点"><svg viewBox="0 0 16 16"><path class="k" d="M8 1v13M1 14.500h14"/><circle class="b wf" cx="8" cy="14" r="1.500"/></svg></button>
        <button aria-label="动态输入"><svg viewBox="0 0 16 16"><path class="b" d="M0 4.500h6M3 1.500v6M3 8v4h3"/><path class="bf" d="M6 8h10v5H6z"/></svg></button>
        <span>(X: 499 Y: 236)选择钢筋进行编辑，选择标注进行修改或移动;</span>
        <svg class="grip" viewBox="0 0 9 9"><path class="kf" d="M6 0h2v2H6zM3 3h2v2H3zM6 3h2v2H6zM0 6h2v2H0zM3 6h2v2H3zM6 6h2v2H6z"/></svg>
      </div>
    </div>

    <!-- callout arrows -->
    <svg class="arrows" viewBox="0 0 1494 964" preserveAspectRatio="xMinYMin slice">
      <path d="M790 417l18-2-2 5 124 51-1 1-125-45-2 4z"/>
      <path d="M340 754L872 534 943 505 941 500 960 503 948 516 946 511 872 542 340 756z"/>
      <path d="M666 504L797 600 965 724 1083 817 1084 810 1093 828 1073 824 1078 822 965 735 790 600 664 506z"/>
    </svg>
  </div>
</body>
</html>
```
FILE: styles.css
```css
* {
  box-sizing: border-box;
}
body {
  margin: 0;
  font-family: "Open Sans", "Noto Sans CJK SC", sans-serif;
  font-size: 12px;
  line-height: 20px;
  color: #333;
  background-color: #f9f9f9;
}
h2, h3, ul {
  margin: 0;
  padding: 0;
  font-size: 12px;
  font-weight: normal;
  list-style: none;
}
button, select, input {
  font: inherit;
  color: inherit;
  margin: 0;
}
button {
  display: flex;
  align-items: center;
  gap: 3px;
  padding: 0;
  border: none;
  background: none;
  white-space: nowrap;
  cursor: pointer;
}
button:disabled {
  color: #b4b4b4;
}
svg {
  flex: none;
  fill: none;
}
button svg {
  width: 16px;
  height: 16px;
}
.sprite {
  position: absolute;
  width: 0;
  height: 0;
}

/* icon strokes and fills */
.k { stroke: #4d5363; }
.k2 { stroke: #4d5363; stroke-width: 2; }
.kk { stroke: #222; }
.kf { fill: #4d5363; }
.b { stroke: #1a73e8; }
.b2 { stroke: #1a73e8; stroke-width: 2; }
.bf { fill: #1a73e8; }
.lf { fill: #cfe2fb; }
.wf { fill: #fff; }
.g { stroke: #b4b4b4; }
.r { stroke: #d8262c; }
.cadtxt {
  font-size: 5px;
  font-weight: bold;
  fill: #1a73e8;
}
.caret {
  width: 0;
  height: 0;
  border: 3px solid transparent;
  border-top: 4px solid #777;
  border-bottom: none;
}

.app {
  position: relative;
  display: flex;
  flex-direction: column;
  height: 100vh;
  overflow: hidden;
}

/* ribbon */
.ribbon {
  display: flex;
  flex: none;
  height: 92px;
  overflow: hidden;
  background-color: #fff;
  border-bottom: 1px solid #d4d4d4;
}
.group {
  flex: none;
  margin-top: -4px;
  height: 91px;
  border-right: 1px solid #dcdcdc;
}
.tools {
  display: grid;
  grid-auto-flow: column;
  grid-template-rows: repeat(3, 23px);
}
.group h2 {
  display: flex;
  align-items: center;
  justify-content: center;
  gap: 7px;
  height: 28px;
}
.group h2 .caret {
  border-width: 4px 4px 0;
}
.tools .caret {
  margin-left: 4px;
}
.tools .big {
  grid-row: 1 / 4;
  flex-direction: column;
  gap: 2px;
  padding-top: 3px;
}
.big svg {
  width: 32px;
  height: 32px;
}
.tools .big .caret {
  margin: 0;
}
.g-select { width: 233px; }
.g-select .tools { padding-left: 3px; grid-template-columns: 50px 98px auto; }
.g-drawing { width: 194px; }
.g-drawing .tools { padding-left: 8px; grid-template-columns: 79px auto; }
.g-common { width: 276px; }
.g-common .tools { padding-left: 8px; grid-template-columns: 67px 112px auto; }
.g-modify { width: 237px; }
.g-modify .tools { padding-left: 8px; grid-template-columns: 54px 54px 63px auto; }
.g-draw { width: 67px; }
.g-draw .tools { padding-left: 7px; grid-template-columns: 32px auto; }
.g-draw .caret { margin-left: 1px; border-top-color: #b4b4b4; }
.g-identify { width: 369px; }
.g-identify .tools { padding-left: 3px; grid-template-columns: 56px 66px 51px 99px auto; }
.g-smart { width: 78px; }
.g-smart .tools { grid-template-columns: 62px; }
.g-rest { border: none; }
.g-rest .tools { padding-left: 8px; }

/* combo boxes */
.combos {
  display: flex;
  flex: none;
  gap: 4px;
  height: 26px;
  padding: 2px 3px;
  background-color: #f0f0f0;
}
.combo {
  position: relative;
  width: 98px;
}
.combo::after {
  content: "";
  position: absolute;
  right: 4px;
  top: 10px;
  border: 3px solid transparent;
  border-top: 3px solid #4d5363;
  border-bottom: none;
  pointer-events: none;
}
.combo select {
  width: 100%;
  height: 21px;
  padding: 0 2px;
  border: 1px solid #dcdcdc;
  border-radius: 3px;
  background-color: #fff;
  appearance: none;
}

/* docked panels */
.work {
  display: flex;
  flex: 1;
  min-height: 0;
  padding-bottom: 3px;
}
.panel {
  display: flex;
  flex-direction: column;
  min-height: 0;
  overflow: hidden;
  border: 1px solid #d4d4d4;
  background-color: #fff;
}
.strip {
  display: flex;
  flex: none;
  justify-content: flex-end;
  height: 11px;
  padding-right: 1px;
  background-color: #e8e8e8;
}
.strip button svg {
  width: 12px;
  height: 12px;
}
.strip .g {
  stroke: #777;
}
.panel h3 {
  flex: none;
  height: 22px;
  padding-left: 8px;
  line-height: 21px;
  color: #777;
  background-color: #f1f1f1;
  border-top: 1px solid #d4d4d4;
  border-bottom: 1px solid #d4d4d4;
}
.thumb {
  display: block;
  width: 8px;
  border-radius: 4px;
  background-color: #cacaca;
}

/* navigation */
.nav {
  flex: none;
  width: 113px;
}
.nav-modes {
  display: flex;
  flex: none;
  gap: 4px;
  height: 28px;
  padding: 3px 1px;
  border-bottom: 1px solid #d4d4d4;
}
.nav-modes button {
  justify-content: center;
  width: 24px;
  height: 22px;
  border-radius: 3px;
}
.nav-modes .on {
  background-color: #c2dbf5;
}
.nav-body {
  display: flex;
  flex: 1;
  min-height: 0;
  padding-top: 4px;
}
.nav-list {
  width: 97px;
  overflow: hidden;
}
.nav-list li {
  position: relative;
  display: flex;
  align-items: center;
  gap: 14px;
  height: 25px;
  margin-bottom: 3px;
  padding-left: 16px;
  white-space: nowrap;
}
.nav-list li svg {
  width: 20px;
  height: 20px;
}
.nav-list li:not(.head) {
  gap: 13px;
}
.nav-list .head {
  justify-content: space-between;
  gap: 0;
  padding-left: 3px;
  background-color: #ececec;
}
.nav-list .current {
  background-color: #d5e8ff;
}
.nav-list .dot::after {
  content: "";
  position: absolute;
  left: 39px;
  top: 1px;
  width: 6px;
  height: 6px;
  border-radius: 3px;
  background-color: #ff0000;
}
.trial {
  justify-content: center;
  width: 47px;
  height: 22px;
  border-radius: 3px 0 0 3px;
  color: #fff;
  background-color: #0a84ea;
}
.nav-body .vbar {
  padding: 12px 3px;
}
.nav-thumb {
  height: 155px;
}

/* component list */
.middle {
  display: flex;
  flex-direction: column;
  flex: none;
  width: 284px;
  margin-left: 4px;
}
.comps {
  flex: 378 1 0;
  margin-bottom: 4px;
}
.tabs {
  display: flex;
  flex: none;
  height: 24px;
  background-color: #f1f1f1;
  border-top: 1px solid #d4d4d4;
  border-bottom: 1px solid #d4d4d4;
}
.tabs button {
  justify-content: center;
  width: 65px;
  color: #777;
  background-color: #dedede;
  border-right: 1px solid #c4c4c4;
}
.tabs .active {
  color: #222;
  font-weight: bold;
  background-color: #f4f4f4;
}
.comp-tools {
  display: flex;
  flex: none;
  gap: 12px;
  height: 28px;
  padding-left: 4px;
  border-bottom: 1px solid #dcdcdc;
}
.comp-tools .caret {
  margin-left: 3px;
}
.more {
  justify-content: center;
  width: 11px;
  margin: 3px 1px 3px auto;
  border: 1px solid #e4e4e4;
  border-radius: 4px;
}
.more svg {
  width: 7px;
  height: 5px;
}
.search {
  display: flex;
  flex: none;
  align-items: center;
  height: 19px;
  padding: 0 4px 0 2px;
  border-bottom: 1px solid #dcdcdc;
}
.search input {
  flex: 1;
  height: 18px;
  padding: 0;
  border: none;
  outline: none;
}
.search input::placeholder {
  color: #999;
}
.search svg {
  width: 16px;
  height: 16px;
}
.tree {
  padding-top: 2px;
}
.tree li {
  display: flex;
  align-items: center;
  gap: 4px;
  height: 24px;
}
.tree .l1 { padding-left: 13px; }
.tree .l2 { padding-left: 33px; }
.tree .l3 { padding-left: 60px; }
.tree span {
  padding: 0 4px;
  border-radius: 3px;
  background-color: #c2dbf3;
}

/* property list */
.props {
  flex: 427 1 0;
}
.props-body {
  display: flex;
  flex: 1;
  min-height: 0;
}
.props-body .vbar {
  padding: 14px 5px;
}
.prop-thumb {
  height: 229px;
}
table {
  table-layout: fixed;
  border-collapse: separate;
  border-spacing: 0;
}
th, td {
  padding: 0 3px;
  overflow: hidden;
  white-space: nowrap;
  font-weight: normal;
  text-align: left;
  border-right: 1px solid #d8d8d8;
  border-bottom: 1px solid #d8d8d8;
}
thead th {
  padding: 0;
  text-align: center;
}
thead .sel {
  color: #fff;
  font-weight: bold;
  background-color: #80bbfb;
}
.ptable {
  flex: none;
  width: 266px;
}
.pc-no { width: 22px; }
.pc-name { width: 101px; }
.ptable tr {
  height: 21px;
}
.ptable tbody th {
  padding: 0;
  text-align: center;
  background-color: #ececec;
}
.ptable td:nth-child(2) {
  color: #1359f2;
}
.ptable .plain td:nth-child(2) {
  color: #333;
}
.ptable .current th {
  color: #fff;
  font-weight: bold;
  background-color: #80bbfb;
}
.ptable .current td:last-child {
  padding-left: 4px;
  box-shadow: inset 0 0 0 2px #808080;
}
.rebar {
  width: 10px;
  height: 12px;
}
.footer {
  flex: none;
  height: 30px;
  padding: 3px 6px;
}
.section-edit {
  justify-content: center;
  width: 80px;
  height: 24px;
  border: 1px solid #c4c4c4;
  border-radius: 3px;
  background-color: #fff;
}
.splitter {
  display: flex;
  flex: none;
  flex-direction: column;
  width: 4px;
  padding-top: 188px;
}
.splitter i {
  height: 100px;
  background-color: #5a6270;
}

/* 3D view */
.right {
  display: flex;
  flex: 1;
  flex-direction: column;
  min-width: 0;
}
.view3d {
  position: relative;
  flex: 474 1 0;
  min-height: 0;
  margin-bottom: 5px;
  overflow: hidden;
  background-color: #000;
}
.scene {
  position: absolute;
  left: 0;
  top: 0;
  width: 100%;
  height: 100%;
}
.scene-c {
  font-size: 18px;
  fill: #bbb;
  stroke: none;
}
.axis {
  font-family: "Liberation Sans", sans-serif;
  font-size: 15px;
}
.rebar-panel {
  position: absolute;
  left: 2px;
  top: 2px;
  width: 171px;
  height: 190px;
  padding: 9px 11px;
  border: 1px solid #c8c8c8;
  background-color: #e4e4e4;
}
.rebar-panel h3 {
  font-size: 14px;
  margin-bottom: 19px;
}
.checks {
  padding: 6px 10px;
  border: 1px solid #ccc;
  border-radius: 3px;
  background-color: #fff;
}
.checks label {
  display: flex;
  align-items: center;
  gap: 3px;
  height: 23px;
  white-space: nowrap;
}
.checks input {
  flex: none;
  width: 14px;
  height: 14px;
  accent-color: #2a7de1;
}

/* rebar editor */
.edit {
  flex: 362 1 0;
  border-right: none;
}
.edit .strip {
  height: 10px;
}
.edit-tools {
  display: flex;
  flex: none;
  align-items: center;
  gap: 12px;
  height: 28px;
  padding: 2px 0 0 5px;
  border-bottom: 1px solid #d4d4d4;
  white-space: nowrap;
}
.edit-tools button {
  gap: 4px;
}
.edit-tools .ico {
  margin-right: 4px;
}
.edit-tools .caret {
  margin-left: 2px;
}
.rows {
  flex: 1;
  min-height: 0;
  overflow: hidden;
}
.rtable {
  width: 1115px;
}
.w7 { width: 7px; }
.w33 { width: 33px; }
.w36 { width: 36px; }
.w38 { width: 38px; }
.w39 { width: 39px; }
.w49 { width: 49px; }
.w56 { width: 56px; }
.w61 { width: 61px; }
.w71 { width: 71px; }
.w73 { width: 73px; }
.w74 { width: 74px; }
.w166 { width: 166px; }
.w216 { width: 216px; }
.rtable thead tr {
  height: 21px;
}
.rtable tbody tr {
  height: 46px;
}
.rtable tbody .empty {
  height: 21px;
}
.rtable tbody th {
  padding: 0;
  background-color: #ececec;
}
.rtable .current th {
  color: #fff;
  background-color: #80bbfb;
}
.rtable td {
  font-family: "Liberation Mono", "Noto Sans CJK SC", monospace;
  font-size: 10px;
  color: #000;
  background-color: #c1dfe2;
}
.rtable .zh {
  font-family: "Liberation Serif", "Noto Sans CJK SC", serif;
  font-size: 12px;
}
.rtable .two {
  padding: 0 2px;
  line-height: 14px;
}
.rtable td .rebar {
  display: block;
  margin-left: 2px;
}
.rtable .empty td {
  background-color: #fff;
}
.rtable .current td:nth-child(2) {
  border-right: 2px solid #808080;
  border-bottom: 2px solid #808080;
}
.rtable .fig {
  padding: 0;
}
.fig svg {
  display: block;
  width: 100%;
  height: 45px;
}
.fig text {
  font-size: 11px;
  fill: #000;
}
.fig .lg {
  font-family: "Liberation Serif", serif;
  font-size: 20px;
}
.fig .red {
  fill: #ff0000;
}
.fig path {
  stroke: #000;
  stroke-width: 2;
}
.hbar {
  display: flex;
  flex: none;
  align-items: center;
  gap: 5px;
  height: 16px;
  padding-left: 5px;
}
.hbar .left {
  border: 4px solid transparent;
  border-left: none;
  border-right: 4px solid #4d5363;
}
.hbar .thumb {
  flex: 1;
  height: 8px;
}

/* section editor */
.dialog {
  position: absolute;
  left: 874px;
  top: 115px;
  display: flex;
  flex-direction: column;
  width: 505px;
  height: 504px;
  border: 2px solid #c3c6cb;
  background-color: #fff;
  box-shadow: 0 4px 14px rgba(0, 0, 0, 0.4);
}
.dlg-title {
  display: flex;
  flex: none;
  align-items: center;
  justify-content: space-between;
  height: 27px;
  padding: 0 9px 0 17px;
  background: linear-gradient(#f2f2f2, #e2e2e2);
  border-bottom: 2px solid #c3c6cb;
}
.dlg-title h3 {
  font-size: 14px;
}
.dlg-title .g {
  stroke: #666;
}
.dlg-tools {
  display: flex;
  flex: none;
  align-items: center;
  gap: 6px;
  height: 33px;
  padding-left: 2px;
}
.dlg-tools button {
  padding: 0 4px;
  margin-right: 1px;
}
.dlg-tools button.on {
  height: 22px;
  padding: 0 5px;
  margin: 0;
  border-radius: 3px;
  background-color: #c2dbf3;
}
.dlg-tools .more {
  height: 25px;
  margin: 0 2px 0 auto;
  padding: 0;
}
.dlg-tools label {
  display: flex;
  align-items: center;
  gap: 4px;
  margin-left: 3px;
  color: #000;
}
.dlg-tools .second {
  margin-left: 18px;
}
.dlg-tools input {
  width: 14px;
  height: 14px;
  accent-color: #2a7de1;
}
.sep {
  width: 1px;
  height: 24px;
  background-color: #d8d8d8;
}
.dlg-canvas {
  position: relative;
  flex: 1;
  min-height: 0;
  background-color: #000;
}
.bar-info {
  position: relative;
  display: flex;
  align-items: center;
  gap: 6px;
  padding: 9px 12px;
  color: #ddd;
}
.bar-info .combo {
  width: 135px;
}
.bar-info select {
  display: block;
  height: 26px;
  padding: 0 6px;
  color: #333;
}
.bar-info .combo::after {
  right: 5px;
  top: 12px;
}
.cad text {
  font-family: "Liberation Mono", monospace;
  font-size: 13px;
  fill: #fff;
}
.cad .label {
  font-family: "Noto Sans CJK SC", sans-serif;
  font-size: 16px;
}
.green text {
  fill: #00ff00;
}
.dlg-status {
  display: flex;
  flex: none;
  align-items: center;
  gap: 1px;
  height: 29px;
  padding: 0 4px 0 2px;
  white-space: nowrap;
}
.dlg-status button {
  justify-content: center;
  width: 24px;
  height: 24px;
  border: 1px solid #999;
  border-radius: 3px;
}
.dlg-status .on {
  border-color: #1a73e8;
  background-color: #d3e4fb;
}
.grip {
  width: 9px;
  height: 9px;
  margin: 12px 0 0 auto;
}

.arrows {
  position: absolute;
  left: 0;
  top: 0;
  width: 100%;
  height: 100%;
  pointer-events: none;
}
.arrows path {
  fill: #ff2412;
}
```
